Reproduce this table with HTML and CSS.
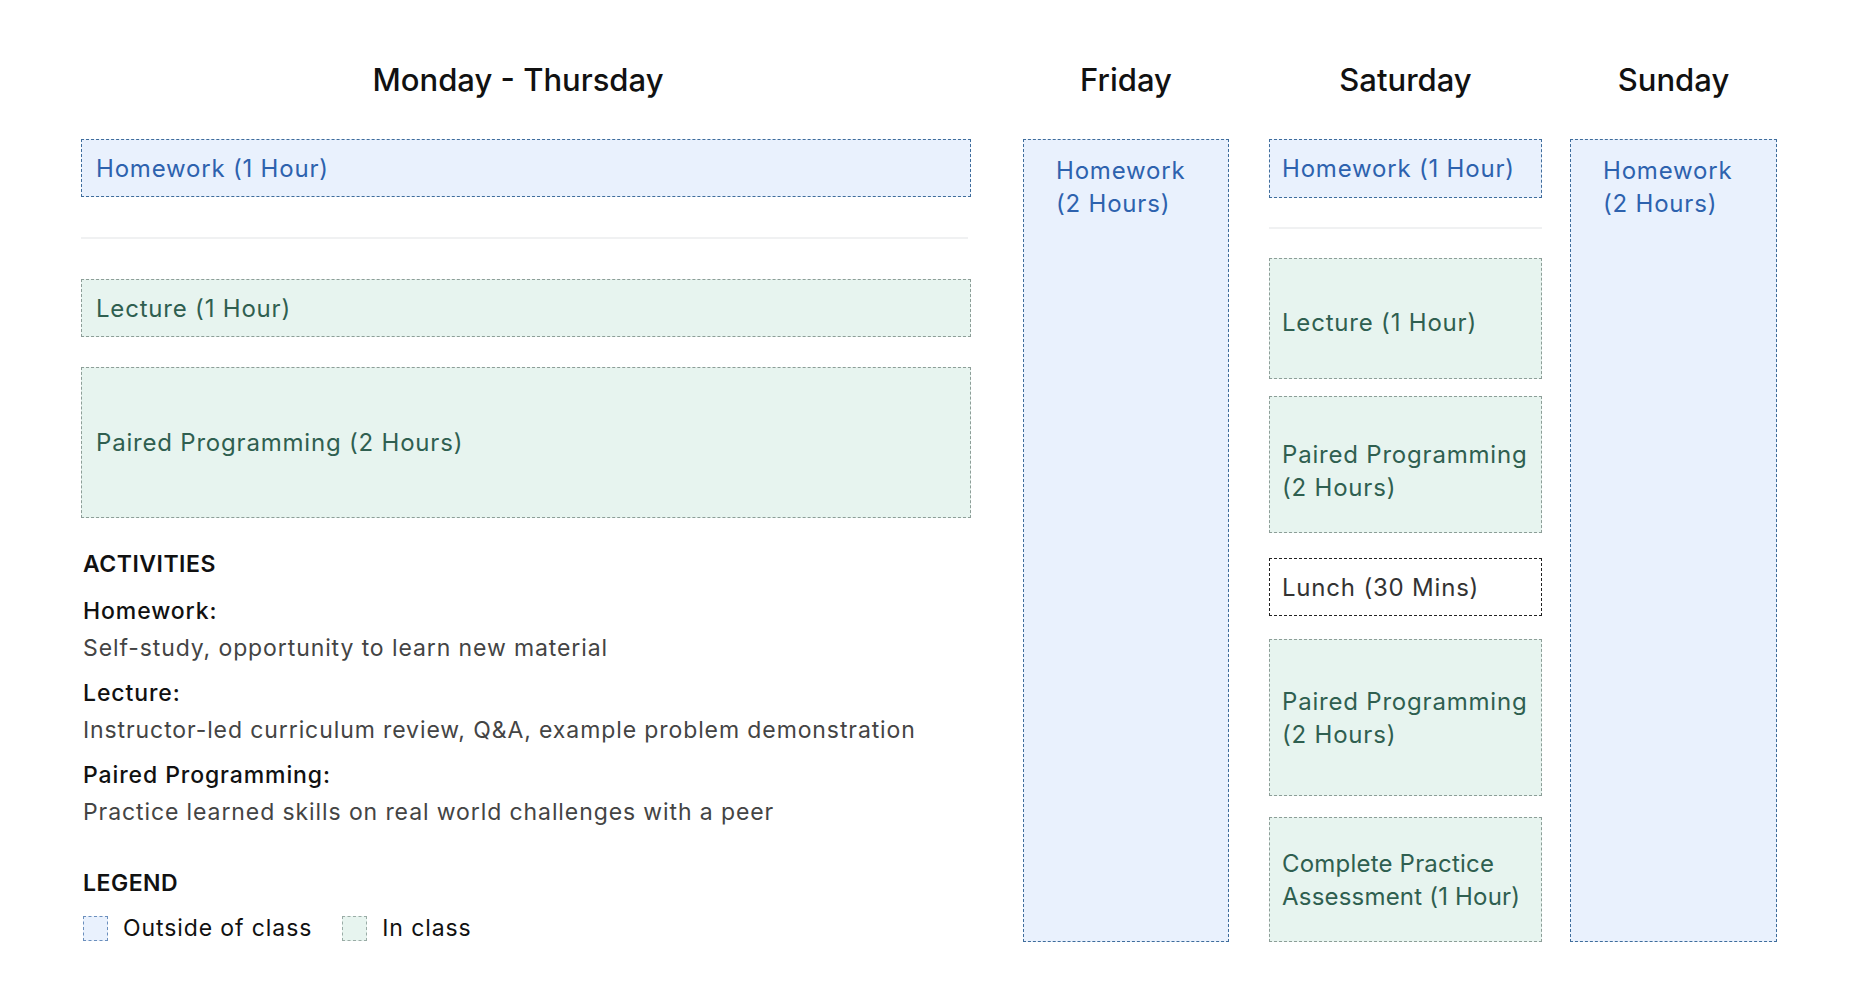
FILE: index.html
```html
<!DOCTYPE html>
<html lang="en">
<head>
<meta charset="utf-8">
<title>Weekly Schedule</title>
<link rel="stylesheet" href="styles.css">
</head>
<body>
<main class="schedule">
  <section class="col col-main">
    <h2 class="day day-main">Monday - Thursday</h2>
    <div class="block out h58">Homework (1 Hour)</div>
    <hr class="divider div-main">
    <div class="block in h58">Lecture (1 Hour)</div>
    <div class="block in h151 mt30">Paired Programming (2 Hours)</div>

    <div class="info">
      <h3 class="info-title">ACTIVITIES</h3>
      <dl class="defs">
        <dt>Homework:</dt>
        <dd>Self-study, opportunity to learn new material</dd>
        <dt>Lecture:</dt>
        <dd>Instructor-led curriculum review, Q&amp;A, example problem demonstration</dd>
        <dt>Paired Programming:</dt>
        <dd>Practice learned skills on real world challenges with a peer</dd>
      </dl>
      <h3 class="info-title legend-title">LEGEND</h3>
      <div class="legend">
        <span class="legend-item"><span class="swatch swatch-out"></span>Outside of class</span>
        <span class="legend-item"><span class="swatch swatch-in"></span>In class</span>
      </div>
    </div>
  </section>

  <section class="col col-fri">
    <h2 class="day">Friday</h2>
    <div class="block out tall">Homework<br>(2 Hours)</div>
  </section>

  <section class="col col-sat">
    <h2 class="day">Saturday</h2>
    <div class="block out h59">Homework (1 Hour)</div>
    <hr class="divider div-sat">
    <div class="block in h121 low">Lecture (1 Hour)</div>
    <div class="block in h137 mt17 lower">Paired Programming<br>(2 Hours)</div>
    <div class="block lunch h58 mt25">Lunch (30 Mins)</div>
    <div class="block in h157 mt23">Paired Programming<br>(2 Hours)</div>
    <div class="block in h125 mt21 tight">Complete Practice<br>Assessment (1 Hour)</div>
  </section>

  <section class="col col-sun">
    <h2 class="day">Sunday</h2>
    <div class="block out tall">Homework<br>(2 Hours)</div>
  </section>
</main>
</body>
</html>
```

FILE: styles.css
```css
* { box-sizing: border-box; }

html, body {
  margin: 0;
  padding: 0;
  background: #ffffff;
}

body {
  font-family: "Inter", "Noto Sans", "Liberation Sans", sans-serif;
  color: #111;
}

.schedule {
  display: flex;
  align-items: flex-start;
  padding: 60px 81px 0 81px;
}

.col {
  display: flex;
  flex-direction: column;
}

.col-main { width: 890px; }
.col-fri { width: 206px; margin-left: 52px; }
.col-sat { width: 273px; margin-left: 40px; }
.col-sun { width: 207px; margin-left: 28px; }

.day {
  margin: 0 0 39px 0;
  height: 40px;
  line-height: 40px;
  font-size: 31px;
  font-weight: 500;
  text-align: center;
  color: #111;
  letter-spacing: 0;
}

.day-main { padding-right: 16px; }

.block {
  display: flex;
  align-items: center;
  padding: 0 12px;
  font-size: 24px;
  line-height: 33px;
  letter-spacing: 0.8px;
  white-space: nowrap;
  border: 1px dashed;
}

.col-main .block { padding: 0 14px; }

.tight { letter-spacing: 0.2px; }

.out {
  background: #e9f1fd;
  border-color: #3f6d9c;
  color: #2d62ae;
}

.in {
  background: #e7f4ef;
  border-color: #8d9e98;
  color: #2f5f50;
}

.lunch {
  background: #ffffff;
  border-color: #222;
  color: #333;
}

.tall {
  height: 803px;
  align-items: flex-start;
  padding: 14px 16px 0 32px;
}

.low { padding-top: 7px; }
.lower { padding-top: 12px; }

.h58 { height: 58px; }
.h59 { height: 59px; }
.h121 { height: 121px; }
.h125 { height: 125px; }
.h137 { height: 137px; }
.h151 { height: 151px; }
.h157 { height: 157px; }

.mt17 { margin-top: 17px; }
.mt21 { margin-top: 21px; }
.mt23 { margin-top: 23px; }
.mt25 { margin-top: 25px; }
.mt30 { margin-top: 30px; }

.divider {
  border: 0;
  height: 2px;
  background: #f0f1f2;
  margin: 0;
}

.div-main { margin: 40px 3px 40px 0; }
.div-sat { margin: 29px 0 29px 0; }

.info {
  margin-top: 30px;
  padding-left: 2px;
}

.info-title {
  margin: 0;
  font-size: 23px;
  line-height: 32px;
  font-weight: 600;
  letter-spacing: 0.5px;
  color: #111;
}

.defs {
  margin: 14px 0 0 0;
}

.defs dt {
  margin: 0 0 3px 0;
  font-size: 23px;
  line-height: 34px;
  font-weight: 500;
  letter-spacing: 0.9px;
  color: #111;
}

.defs dd {
  margin: 0 0 11px 0;
  font-size: 23px;
  line-height: 34px;
  letter-spacing: 0.9px;
  color: #444;
}

.legend-title { margin-top: 38px; }

.legend {
  display: flex;
  gap: 30px;
  margin-top: 16px;
}

.legend-item {
  display: flex;
  align-items: center;
  gap: 15px;
  font-size: 23px;
  line-height: 26px;
  letter-spacing: 0.9px;
  color: #111;
}

.swatch {
  width: 25px;
  height: 25px;
  border: 1px dashed;
}

.swatch-out {
  background: #e9f1fd;
  border-color: #6b8fbd;
}

.swatch-in {
  background: #e7f4ef;
  border-color: #9aaca6;
}
```
